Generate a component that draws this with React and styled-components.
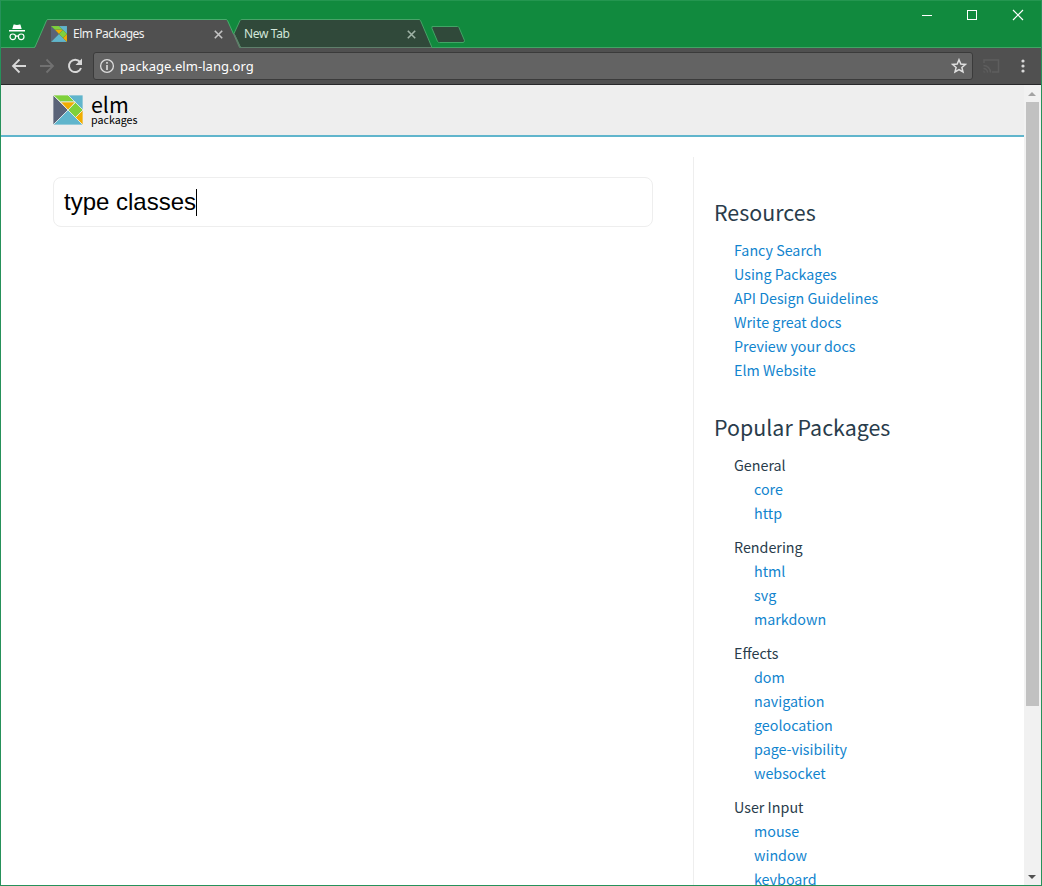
import React from "react";
import styled, { createGlobalStyle } from "styled-components";

const GlobalStyle = createGlobalStyle`
  * { box-sizing: border-box; }
  html, body { margin: 0; padding: 0; overflow: hidden; }
`;

const uiFont = `"Noto Sans", "Open Sans", sans-serif`;
const pageFont = `"Noto Sans CJK SC", "Noto Sans", sans-serif`;

const Window = styled.div`
  display: flex;
  flex-direction: column;
  width: 1042px;
  height: 886px;
  border: 1px solid #26915a;
  border-top-color: #249650;
  background: #fff;
  overflow: hidden;
`;

const TitleBar = styled.header`
  display: flex;
  justify-content: space-between;
  flex: none;
  height: 47px;
  background: #118a3e;
  border-bottom: 1px solid #41a565;
`;

const TabStrip = styled.div`
  display: flex;
  align-items: flex-start;
  padding-top: 18px;
  height: 47px;
`;

const Incognito = styled.div`
  width: 33px;
  padding: 5px 0 0 7px;
  line-height: 0;
`;

const Tab = styled.div`
  position: relative;
  z-index: ${(p) => (p.$active ? 2 : 1)};
  display: flex;
  align-items: center;
  width: ${(p) => (p.$active ? 206 : 200)}px;
  height: 29px;
  margin-left: ${(p) => (p.$active ? 0 : -8)}px;
  padding: 1px ${(p) => (p.$active ? 17 : 16)}px 0 ${(p) => (p.$active ? 17 : 12)}px;
  color: ${(p) => (p.$active ? "#f2f2f2" : "#d2e6d9")};
  font: 12px/16px ${uiFont};
`;

const TabShape = styled.svg`
  position: absolute;
  left: 0;
  top: 0;
  z-index: -1;
`;

const TabTitle = styled.span`
  flex: 1;
  white-space: nowrap;
  margin-left: ${(p) => p.$gap || 0}px;
  letter-spacing: ${(p) => p.$track || 0}px;
`;

const NewTab = styled.div`
  padding-top: 5px;
  margin-left: -2px;
  line-height: 0;
`;

const Controls = styled.div`
  display: flex;
  gap: 35px;
  padding: 8px 17px 0 0;
`;

const Toolbar = styled.div`
  display: flex;
  align-items: center;
  flex: none;
  height: 37px;
  padding-left: 10px;
  background: #505050;
  border-bottom: 1px solid #28282a;
`;

const ToolIcon = styled.span`
  display: block;
  flex: none;
  line-height: 0;
  margin-right: ${(p) => p.$gap}px;
`;

const AddressBar = styled.div`
  display: flex;
  align-items: center;
  width: 880px;
  height: 28px;
  padding: 0 5px;
  background: #636363;
  border: 1px solid #3b3b3b;
  border-radius: 3px;
  color: #fff;
  font: 13px/18px ${uiFont};
`;

const Url = styled.span`
  flex: 1;
  margin-left: 5px;
  letter-spacing: 0.05px;
`;

const Viewport = styled.div`
  display: flex;
  flex: 1;
  min-height: 0;
`;

const Page = styled.div`
  display: flex;
  flex-direction: column;
  flex: 1;
  overflow: hidden;
  color: #293c4b;
  font-family: ${pageFont};
`;

const SiteHeader = styled.div`
  display: flex;
  flex: none;
  height: 52px;
  padding: 10px 0 0 52px;
  background: #eee;
  border-bottom: 2px solid #60b5cc;
`;

const Brand = styled.div`
  display: flex;
  flex-direction: column;
  margin: 0 0 0 8px;
  color: #000;
`;

const BrandName = styled.div`
  font-size: 21.4px;
  line-height: 22px;
  height: 20px;
  margin-top: -2px;
`;

const BrandSub = styled.div`
  font-size: 10.7px;
  line-height: 14px;
`;

const Columns = styled.div`
  display: flex;
  flex: 1;
  min-height: 0;
  padding: 20px 0 0 52px;
`;

const Catalog = styled.main`
  width: 640px;
  padding: 20px 40px 0 0;
`;

const SearchBox = styled.div`
  display: flex;
  align-items: center;
  height: 50px;
  padding: 0 10px;
  border: 1px solid #eee;
  border-radius: 8px;
  color: #000;
  font: 24px/28px "Liberation Sans", Arial, sans-serif;
`;

const Caret = styled.span`
  width: 1px;
  height: 27px;
  background: #000;
`;

const Sidebar = styled.aside`
  flex: 1;
  padding: 39px 0 0 20px;
  border-left: 1px solid #eee;
`;

const Heading = styled.h2`
  margin: 0 0 10px;
  height: 32px;
  font-size: 21.4px;
  font-weight: 400;
  line-height: 32px;
  letter-spacing: 0.02px;
`;

const List = styled.ul`
  margin: 0 0 ${(p) => p.$after || 0}px;
  padding: 0 0 0 20px;
  list-style: none;
  font-size: 14.3px;
  line-height: 24px;
`;

const Item = styled.li`
  height: 24px;
  white-space: nowrap;
`;

const Link = styled.a`
  color: #1184ce;
`;

const Scrollbar = styled.div`
  display: flex;
  flex-direction: column;
  align-items: center;
  width: 17px;
  padding-right: 1px;
  background: #f1f1f1;
`;

const ScrollArrow = styled.div`
  display: flex;
  align-items: center;
  justify-content: center;
  flex: none;
  height: 17px;
`;

const Thumb = styled.div`
  width: 13px;
  height: 604px;
  margin-bottom: auto;
  background: #c1c1c1;
`;

const LogoSvg = styled.svg`
  flex: none;
`;

function ElmLogo({ size, gap = 7, line = "#eee" }) {
  return (
    <LogoSvg width={size} height={size} viewBox="0 0 323 323">
      <rect width="323" height="323" fill={line} />
      <g stroke={line} strokeWidth={gap} strokeLinejoin="miter">
        <path d="M0 0 162 162 0 323Z" fill="#5a6378" />
        <path d="M0 323 162 162 323 323Z" fill="#60b5cc" />
        <path d="M0 0H162L242 75H81Z" fill="#7fd13b" />
        <path d="M162 0H323V162Z" fill="#60b5cc" />
        <path d="M81 75H242L162 162Z" fill="#f0ad00" />
        <path d="M242 81 323 162 242 242 162 162Z" fill="#7fd13b" />
        <path d="M323 162V323L242 242Z" fill="#f0ad00" />
      </g>
    </LogoSvg>
  );
}

function CloseMark({ color }) {
  return (
    <svg width="9" height="9" viewBox="0 0 9 9">
      <path d="M.8.8 8.2 8.2M8.2.8.8 8.2" stroke={color} strokeWidth="1.6" />
    </svg>
  );
}

const resources = [
  "Fancy Search",
  "Using Packages",
  "API Design Guidelines",
  "Write great docs",
  "Preview your docs",
  "Elm Website",
];

const packages = [
  ["General", ["core", "http"]],
  ["Rendering", ["html", "svg", "markdown"]],
  ["Effects", ["dom", "navigation", "geolocation", "page-visibility", "websocket"]],
  ["User Input", ["mouse", "window", "keyboard"]],
];

export default function App() {
  return (
    <Window>
      <GlobalStyle />
      <TitleBar>
        <TabStrip>
          <Incognito>
            <svg width="18" height="18" viewBox="0 0 18 18">
              <path d="M4.3 5 5.5.8Q5.7.2 6.3.4L9 1l2.7-.6q.6-.2.8.4L13.7 5Z" fill="#fff" />
              <rect x="1" y="6" width="16" height="1.5" fill="#fff" />
              <g fill="none" stroke="#fff" strokeWidth="1.2">
                <circle cx="4.8" cy="12.8" r="2.8" />
                <circle cx="13.2" cy="12.8" r="2.8" />
                <path d="M7.6 12.4q1.4-1 2.8 0" />
              </g>
            </svg>
          </Incognito>
          <Tab $active>
            <TabShape width="208" height="29" viewBox="0 0 208 29">
              <path d="M0 29 1 28 12.5 1.5Q12.8.5 14 .5H192Q193 .5 193.5 1.5L205 28 206 29Z" fill="#505050" />
              <path d="M0 28.5 1 28 12.5 1.5Q12.8.5 14 .5H192Q193 .5 193.5 1.5L199.500 15" fill="none" stroke="#48ac6c" />
              <path d="M199.500 15 205.500 28.500" fill="none" stroke="#6d7a71" />
            </TabShape>
            <ElmLogo size={16} gap={3} line="#5d7560" />
            <TabTitle $gap={6} $track={-0.48}>Elm Packages</TabTitle>
            <CloseMark color="#c4c4c4" />
          </Tab>
          <Tab>
            <TabShape width="200" height="29" viewBox="0 0 200 29">
              <path d="M8.500 28.500 2 14.500 8 1.500Q8.500.5 10 .5H187Q188 .5 188.500 1.500L200 28.500Z" fill="#30493a" stroke="#48a368" />
              <path d="M2 14.500 8.500 28.500H200" fill="none" stroke="#5f7f6b" />
            </TabShape>
            <TabTitle $track={-0.35}>New Tab</TabTitle>
            <CloseMark color="#9fb3a6" />
          </Tab>
          <NewTab>
            <svg width="36" height="20" viewBox="0 0 36 20">
              <path d="M3.500 2.500H29Q30 2.500 30.500 3.500L36 16.500Q36 18.500 34.500 18.500H11Q9.500 18.500 9 17.500L3.500 4.500Z" transform="translate(-1.500 0)" fill="#30493a" stroke="#41a565" />
            </svg>
          </NewTab>
        </TabStrip>
        <Controls>
          <svg width="10" height="12" viewBox="0 0 10 12">
            <path d="M0 6.500H10" stroke="#fff" />
          </svg>
          <svg width="10" height="12" viewBox="0 0 10 12">
            <rect x=".5" y="1.500" width="9" height="9" fill="none" stroke="#fff" />
          </svg>
          <svg width="12" height="12" viewBox="0 0 12 12">
            <path d="M1 1 11 11M11 1 1 11" stroke="#fff" strokeWidth="1.200" />
          </svg>
        </Controls>
      </TitleBar>
      <Toolbar>
        <ToolIcon $gap={12}>
          <svg width="16" height="16" viewBox="0 0 16 16" fill="none" stroke="#d8d8d8" strokeWidth="1.800">
            <path d="M15 8H2.500M8.500 1.500 2 8 8.500 14.500" />
          </svg>
        </ToolIcon>
        <ToolIcon $gap={11}>
          <svg width="16" height="16" viewBox="0 0 16 16" fill="none" stroke="#717171" strokeWidth="1.800">
            <path d="M1 8H13.500M7.500 1.500 14 8 7.500 14.500" />
          </svg>
        </ToolIcon>
        <ToolIcon $gap={9}>
          <svg width="18" height="18" viewBox="0 0 18 18">
            <path d="M14 5A6.200 6.200 0 1 0 15 11" fill="none" stroke="#d8d8d8" strokeWidth="2" />
            <path d="M16 1.500V8H9.500Z" fill="#d8d8d8" />
          </svg>
        </ToolIcon>
        <AddressBar>
          <svg width="16" height="16" viewBox="0 0 16 16">
            <circle cx="8" cy="8" r="6.400" fill="none" stroke="#dedede" strokeWidth="1.300" />
            <path d="M8 4V5.700M8 7V12" stroke="#dedede" strokeWidth="1.600" />
          </svg>
          <Url>package.elm-lang.org</Url>
          <svg width="16" height="16" viewBox="0 0 16 16">
            <path d="M8 1.700 9.800 6 14.500 6.400 10.900 9.500 12 14 8 11.600 4 14 5.100 9.500 1.500 6.400 6.200 6Z" fill="none" stroke="#e0e0e0" strokeWidth="1.500" />
          </svg>
        </AddressBar>
        <ToolIcon $gap={21}>
          <svg width="27" height="16" viewBox="0 0 27 16" fill="none" stroke="#5e5e5e" strokeWidth="1.500">
            <path d="M11 5V2H25.500V14H19M10.500 7.500A7 7 0 0 1 17.500 14.500M10.500 10.500A4 4 0 0 1 14.500 14.500" />
            <path d="M10.500 12.500 12.500 14.500H10.500Z" fill="#5e5e5e" stroke="none" />
          </svg>
        </ToolIcon>
        <ToolIcon $gap={0}>
          <svg width="4" height="16" viewBox="0 0 4 16" fill="#d8d8d8">
            <circle cx="2" cy="3" r="1.600" />
            <circle cx="2" cy="8" r="1.600" />
            <circle cx="2" cy="13" r="1.600" />
          </svg>
        </ToolIcon>
      </Toolbar>
      <Viewport>
        <Page>
          <SiteHeader>
            <ElmLogo size={30} gap={8} />
            <Brand>
              <BrandName>elm</BrandName>
              <BrandSub>packages</BrandSub>
            </Brand>
          </SiteHeader>
          <Columns>
            <Catalog>
              <SearchBox>
                type classes
                <Caret />
              </SearchBox>
            </Catalog>
            <Sidebar>
              <Heading>Resources</Heading>
              <List $after={29}>
                {resources.map((name) => (
                  <Item key={name}>
                    <Link>{name}</Link>
                  </Item>
                ))}
              </List>
              <Heading>Popular Packages</Heading>
              <List>
                {packages.map(([group, names]) => (
                  <li key={group}>
                    {group}
                    <List $after={10}>
                      {names.map((name) => (
                        <Item key={name}>
                          <Link>{name}</Link>
                        </Item>
                      ))}
                    </List>
                  </li>
                ))}
              </List>
            </Sidebar>
          </Columns>
        </Page>
        <Scrollbar>
          <ScrollArrow>
            <svg width="8" height="4" viewBox="0 0 8 4">
              <path d="M0 4 4 0 8 4Z" fill="#a3a3a3" />
            </svg>
          </ScrollArrow>
          <Thumb />
          <ScrollArrow>
            <svg width="8" height="4" viewBox="0 0 8 4">
              <path d="M0 0 4 4 8 0Z" fill="#505050" />
            </svg>
          </ScrollArrow>
        </Scrollbar>
      </Viewport>
    </Window>
  );
}
